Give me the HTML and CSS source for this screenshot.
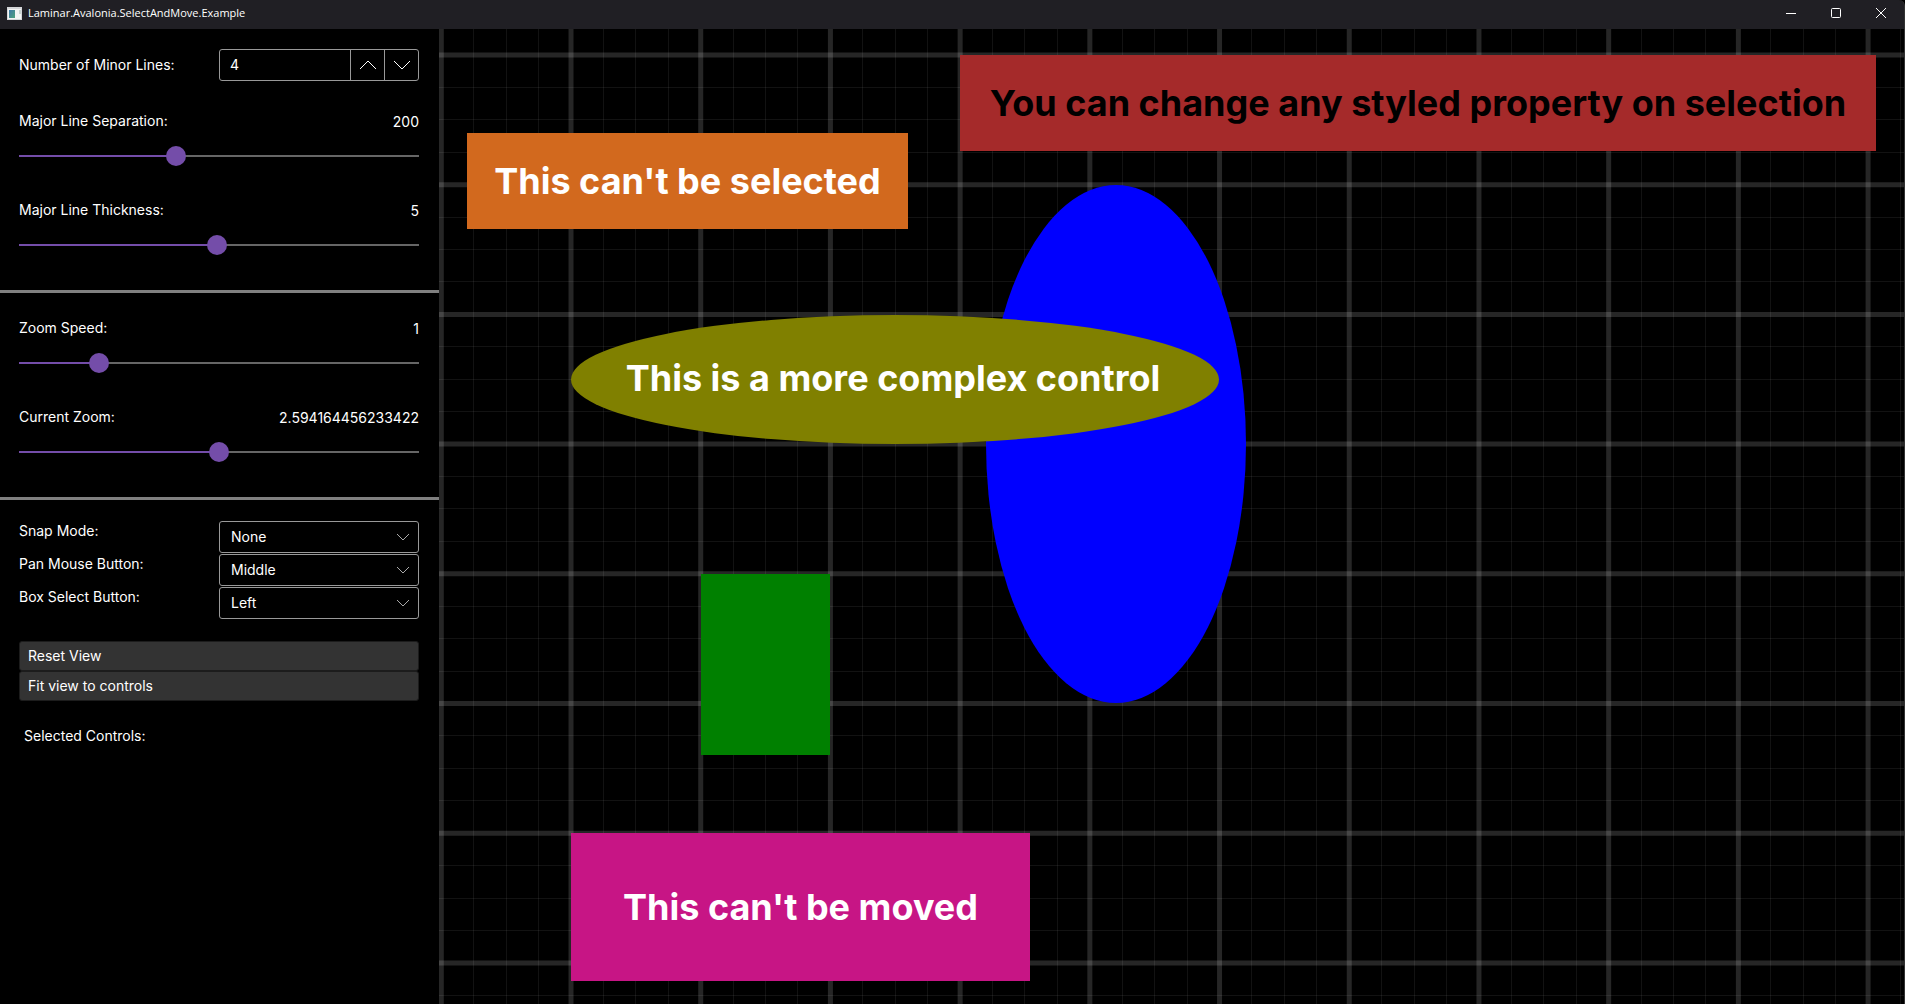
FILE: index.html
```html
<!DOCTYPE html>
<html lang="en">
<head>
<meta charset="utf-8">
<title>Laminar.Avalonia.SelectAndMove.Example</title>
<link rel="stylesheet" href="styles.css">
</head>
<body>
<header class="titlebar">
  <svg class="app-icon" width="15" height="13" viewBox="0 0 15 13" aria-hidden="true">
    <defs><linearGradient id="screen" x1="0" y1="0" x2="1" y2="1"><stop offset="0" stop-color="#3f78a8"/><stop offset="1" stop-color="#4fa37c"/></linearGradient></defs>
    <rect width="15" height="13" fill="#d4d6d8"/>
    <rect x="1" y="2" width="13" height="10" fill="#f4f5f5"/>
    <rect x="2" y="3" width="6" height="8" fill="url(#screen)"/>
    <rect x="12" y="3" width="2" height="4" fill="#c8d3d0"/>
  </svg>
  <h1 class="title">Laminar.Avalonia.SelectAndMove.Example</h1>
  <div class="window-buttons">
    <button class="window-button" type="button" aria-label="Minimize"><svg width="12" height="12" viewBox="0 0 12 12"><path d="M1 6.500H11"/></svg></button>
    <button class="window-button" type="button" aria-label="Maximize"><svg width="12" height="12" viewBox="0 0 12 12"><rect x="1.500" y="1.500" width="9" height="9" rx="1"/></svg></button>
    <button class="window-button" type="button" aria-label="Close"><svg width="12" height="12" viewBox="0 0 12 12"><path d="M1 1L11 11M11 1L1 11"/></svg></button>
  </div>
</header>
<div class="workspace">
  <aside class="sidebar">
    <section class="panel">
      <div class="field">
        <label for="minor-lines">Number of Minor Lines:</label>
        <div class="spinner">
          <input id="minor-lines" class="spinner-input" type="text" inputmode="numeric" value="4">
          <button class="spinner-button" type="button" aria-label="Increase"><svg width="18" height="10" viewBox="0 0 18 10"><path d="M1 9L9 1L17 9"/></svg></button>
          <button class="spinner-button" type="button" aria-label="Decrease"><svg width="18" height="10" viewBox="0 0 18 10"><path d="M1 1L9 9L17 1"/></svg></button>
        </div>
      </div>
      <div class="slider-row">
        <label for="separation">Major Line Separation:</label>
        <output for="separation">200</output>
        <input id="separation" class="slider" type="range" min="10" max="500" value="200" style="--fill: 39%">
      </div>
      <div class="slider-row">
        <label for="thickness">Major Line Thickness:</label>
        <output for="thickness">5</output>
        <input id="thickness" class="slider" type="range" min="0.1" max="10" step="0.1" value="5" style="--fill: 50%">
      </div>
    </section>
    <section class="panel">
      <div class="slider-row">
        <label for="speed">Zoom Speed:</label>
        <output for="speed">1</output>
        <input id="speed" class="slider" type="range" min="0.1" max="5" step="0.1" value="1" style="--fill: 20%">
      </div>
      <div class="slider-row">
        <label for="zoom">Current Zoom:</label>
        <output for="zoom">2.594164456233422</output>
        <input id="zoom" class="slider" type="range" min="0" max="5.188" step="any" value="2.594164456233422" style="--fill: 50%">
      </div>
    </section>
    <section class="panel">
      <div class="choices">
        <label for="snap">Snap Mode:</label>
        <div class="combo"><select id="snap"><option>None</option></select><svg width="14" height="8" viewBox="0 0 14 8"><path d="M1 1L7 7L13 1"/></svg></div>
        <label for="pan">Pan Mouse Button:</label>
        <div class="combo"><select id="pan"><option>Middle</option></select><svg width="14" height="8" viewBox="0 0 14 8"><path d="M1 1L7 7L13 1"/></svg></div>
        <label for="box">Box Select Button:</label>
        <div class="combo"><select id="box"><option>Left</option></select><svg width="14" height="8" viewBox="0 0 14 8"><path d="M1 1L7 7L13 1"/></svg></div>
      </div>
      <div class="actions">
        <button class="action" type="button">Reset View</button>
        <button class="action" type="button">Fit view to controls</button>
      </div>
      <p class="selected">Selected Controls:</p>
    </section>
  </aside>
  <main class="canvas">
    <svg class="grid" aria-hidden="true"><path class="minor" id="minor-x"/><path class="minor" id="minor-y"/><path class="major" id="major-x"/><path class="major" id="major-y"/></svg>
    <div class="item item-blue"></div>
    <div class="item item-brown">You can change any styled property on selection</div>
    <div class="item item-orange">This can't be selected</div>
    <div class="item item-olive">This is a more complex control</div>
    <div class="item item-green"></div>
    <div class="item item-pink">This can't be moved</div>
  </main>
</div>
<script src="grid.js"></script>
</body>
</html>
```
FILE: styles.css
```css
* { box-sizing: border-box; }

body {
  margin: 0;
  height: 100vh;
  display: flex;
  flex-direction: column;
  background: #000;
  color: #fff;
  font: 14px/20px Inter, sans-serif;
  overflow: hidden;
}

input, select, button { font: inherit; color: inherit; }

.titlebar {
  display: flex;
  align-items: center;
  height: 29px;
  flex: none;
  padding: 0 1px 3px 7px;
  border-right: 1px solid #333;
  border-top-right-radius: 6px;
  background: #201f24;
}

.title {
  flex: 1;
  margin: 0 0 0 6px;
  font: 11px/20px "Open Sans", sans-serif;
}

.window-buttons { display: flex; }

.window-button {
  width: 45px;
  height: 26px;
  padding: 0;
  border: 0;
  background: none;
  display: grid;
  place-items: center;
}

svg path, svg rect { stroke-width: 1; }
button svg { fill: none; stroke: #fff; }

.workspace { flex: 1; display: flex; min-height: 0; }

.sidebar { width: 439px; flex: none; }

.panel { padding: 20px 20px 35px 19px; }
.panel + .panel { padding-top: 19px; border-top: 3px solid #808080; }

.field {
  display: grid;
  grid-template-columns: minmax(0, 1fr) minmax(0, 1fr);
  align-items: center;
  margin-bottom: 24px;
}

.spinner {
  display: flex;
  height: 32px;
  border: 1px solid #999;
  border-radius: 3px;
}

.spinner-input {
  flex: 1;
  min-width: 0;
  padding: 0 10px;
  border: 0;
  background: none;
}

.spinner-button {
  width: 34px;
  padding: 0;
  border: 0;
  border-left: 1px solid #999;
  background: none;
  display: grid;
  place-items: center;
}

.slider-row {
  display: grid;
  grid-template-columns: 1fr auto;
  row-gap: 15px;
  padding-top: 6px;
}
.slider-row + .slider-row { margin-top: 28px; }
.slider-row output { padding-top: 1px; margin-bottom: -1px; }

.slider {
  grid-column: 1 / -1;
  appearance: none;
  width: 100%;
  height: 20px;
  margin: 0;
  background: linear-gradient(to right, #744da9 var(--fill), #666 var(--fill)) center / 100% 2px no-repeat;
}

.slider::-webkit-slider-thumb {
  appearance: none;
  width: 20px;
  height: 20px;
  border-radius: 50%;
  background: #744da9;
}

.choices {
  display: grid;
  grid-template-columns: 1fr 1fr;
  row-gap: 1px;
  margin-top: 2px;
}

.combo { display: grid; align-items: center; }

.combo select {
  grid-area: 1 / 1;
  appearance: none;
  height: 32px;
  padding: 0 11px;
  border: 1px solid #999;
  border-radius: 3px;
  background: none;
}

.combo svg {
  grid-area: 1 / 1;
  justify-self: end;
  margin-right: 9px;
  fill: none;
  stroke: #aaa;
  pointer-events: none;
}

.actions { display: flex; flex-direction: column; margin-top: 22px; }

.action {
  height: 30px;
  padding: 0 8px;
  border: 1px solid #1c1c1c;
  border-radius: 3px;
  background: #333;
  text-align: left;
}

.selected { margin: 25px 5px; }

.canvas { flex: 1; position: relative; overflow: hidden; border-right: 1px solid #333; }

.grid { position: absolute; inset: 0; width: 100%; height: 100%; }
.grid path { fill: none; stroke: #fff; }
.grid .minor { stroke-opacity: 0.07; }
.grid .major { stroke-opacity: 0.15; stroke-width: 5; }

.item {
  position: absolute;
  display: grid;
  place-items: center;
  font-size: 36px;
  line-height: 44px;
  font-weight: 700;
  white-space: nowrap;
}

.item-blue { left: 547px; top: 156px; width: 260px; height: 518px; border-radius: 50%; background: #00f; }
.item-brown { left: 521px; top: 26px; width: 916px; height: 96px; background: #a52a2a; color: #000; }
.item-orange { left: 28px; top: 104px; width: 441px; height: 96px; background: #d2691e; }
.item-olive { left: 132px; top: 286px; width: 648px; height: 129px; padding: 0 4px 4px 0; border-radius: 50%; background: #808000; }
.item-green { left: 262px; top: 545px; width: 129px; height: 181px; background: #008000; }
.item-pink { left: 132px; top: 804px; width: 459px; height: 148px; background: #c71585; }
```
FILE: grid.js
```js
const STEP = 129.708;
const DIVISIONS = 4;

function drawGrid() {
  const canvas = document.querySelector(".canvas");
  const axes = [
    { name: "x", origin: 2.3, extent: canvas.clientWidth, line: p => `M${p} 0V${canvas.clientHeight}` },
    { name: "y", origin: 26, extent: canvas.clientHeight, line: p => `M0 ${p}H${canvas.clientWidth}` }
  ];
  for (const { name, origin, extent, line } of axes) {
    let major = "";
    let minor = "";
    for (let i = -DIVISIONS; origin + i * STEP / DIVISIONS < extent + 3; i++) {
      const p = origin + i * STEP / DIVISIONS;
      if (i % DIVISIONS === 0) major += line(p);
      else minor += line(Math.floor(p) + 0.5);
    }
    document.getElementById(`major-${name}`).setAttribute("d", major);
    document.getElementById(`minor-${name}`).setAttribute("d", minor);
  }
}

drawGrid();
window.addEventListener("resize", drawGrid);
```
